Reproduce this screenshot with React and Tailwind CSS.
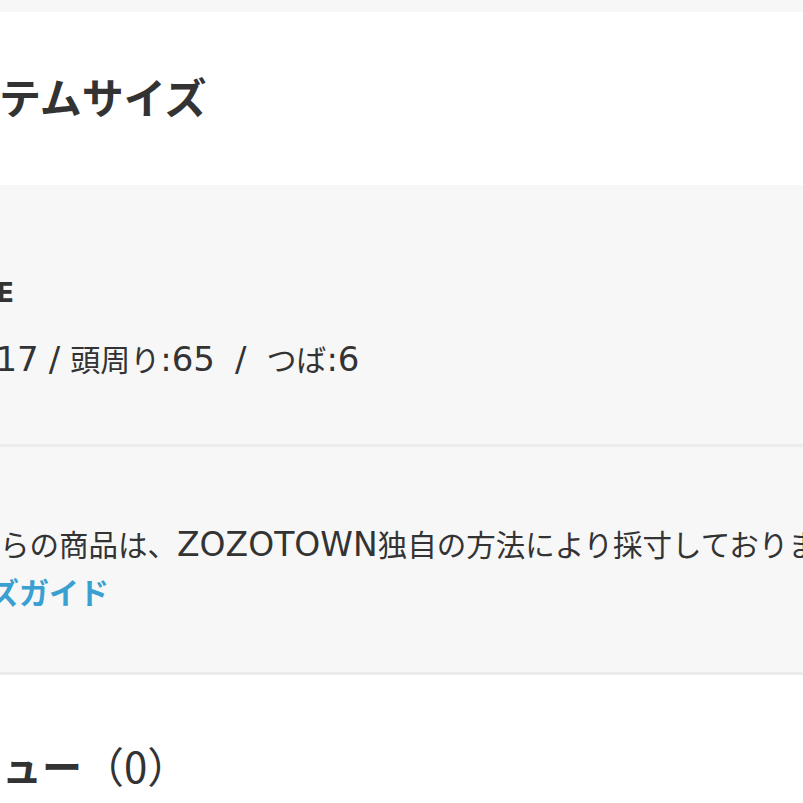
const base = { fontFamily: '"DejaVu Sans", "Noto Sans CJK JP", sans-serif' };

// split text into CJK and Latin runs so each can get its own size
function Mixed({ text, cjk, latin }) {
  const parts = text.split(/([\u3000-\u30ff\u4e00-\u9fff\uff00-\uffef]+)/).filter(Boolean);
  return parts.map((part, i) => {
    const isCjk = /[\u3000-\u30ff\u4e00-\u9fff\uff00-\uffef]/.test(part);
    return (
      <span key={i} className={isCjk ? cjk : latin}>
        {part}
      </span>
    );
  });
}

export default function App() {
  return (
    <div style={base} className="h-[803px] w-[803px] overflow-hidden bg-white text-[#333]">
      <div className="h-[12px] bg-[#f7f7f7]" />

      {/* item size heading */}
      <div className="flex h-[173px] items-center pt-[3px]">
        <h2 className="-ml-[82px] whitespace-nowrap text-[42px] font-bold leading-none">アイテムサイズ</h2>
      </div>

      <div className="bg-[#f7f7f7]">
        <div className="h-[259px] pt-[88px]">
          <p className="-ml-[62px] flex h-[40px] items-center text-[27px] font-bold">FREE</p>
          <p className="-ml-[76px] mt-[24px] h-[44px] whitespace-nowrap leading-[44px]">
            <Mixed text="高さ:17" cjk="text-[30px]" latin="text-[34px]" />
            <span className="mx-[10px] text-[34px]">/</span>
            <Mixed text="頭周り:65" cjk="text-[30px]" latin="text-[34px]" />
            <span className="mx-[20px] text-[34px]">/</span>
            <Mixed text="つば:6" cjk="text-[30px]" latin="text-[34px]" />
          </p>
        </div>
        <div className="h-[3px] bg-[#ececec]" />
        <div className="h-[225px] pt-[78px]">
          <p className="-ml-[59px] h-[40px] whitespace-nowrap leading-[40px]">
            <Mixed
              text="これらの商品は、ZOZOTOWN独自の方法により採寸しております。"
              cjk="text-[29.5px]"
              latin="text-[33px]"
            />
          </p>
          <a className="-ml-[70px] mt-[8px] flex h-[40px] items-center whitespace-nowrap text-[30px] font-bold text-[#3a9fd1]">
            サイズガイド
          </a>
        </div>
        <div className="h-[3px] bg-[#ececec]" />
      </div>

      {/* review heading */}
      <div className="pt-[65px]">
        <h2
          className="-ml-[78px] flex h-[50px] items-center whitespace-nowrap text-[40px] font-bold leading-none"
          style={{ fontFamily: '"Noto Sans CJK JP", sans-serif' }}
        >
          レビュー<span className="text-[42px] font-normal">（0）</span>
        </h2>
      </div>
    </div>
  );
}
